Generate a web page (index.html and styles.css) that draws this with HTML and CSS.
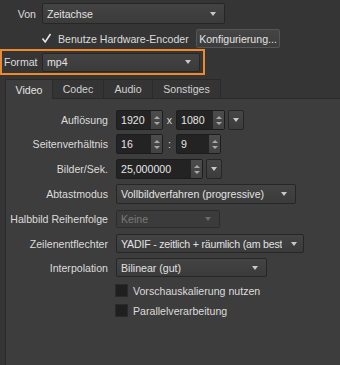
FILE: index.html
```html
<!DOCTYPE html>
<html>
<head>
<meta charset="utf-8">
<link rel="stylesheet" href="styles.css">
</head>
<body>
<div class="page">
  <div class="row r-von">
    <span class="lbl lbl-von">Von</span>
    <div class="combo c-von"><span>Zeitachse</span><i class="arrow"></i></div>
  </div>
  <div class="row r-hw">
    <svg class="tick" width="11" height="11" viewBox="0 0 11 11"><path d="M1.5 5.5 L4.2 9 L9.5 1" fill="none" stroke="#e6e6e6" stroke-width="1.6"/></svg>
    <span class="hwtext">Benutze Hardware-Encoder</span>
    <div class="btn">Konfigurierung...</div>
  </div>
  <div class="format-box">
    <span class="lbl lbl-format">Format</span>
    <div class="combo c-format"><span>mp4</span><i class="arrow"></i></div>
  </div>
  <div class="tabs">
    <div class="tab active">Video</div>
    <div class="tab">Codec</div>
    <div class="tab">Audio</div>
    <div class="tab">Sonstiges</div>
  </div>
  <div class="panel">
    <div class="form">
      <div class="frow fr1">
        <span class="flbl">Auflösung</span>
        <div class="ctrls">
          <div class="spin w47"><span>1920</span><i class="spinbtn"><b class="up"></b><b class="dn"></b></i></div>
          <span class="sep">x</span>
          <div class="spin w49"><span>1080</span><i class="spinbtn"><b class="up"></b><b class="dn"></b></i></div>
          <div class="ddbtn"><i class="arrow"></i></div>
        </div>
      </div>
      <div class="frow fr2">
        <span class="flbl">Seitenverhältnis</span>
        <div class="ctrls">
          <div class="spin w47"><span>16</span><i class="spinbtn"><b class="up"></b><b class="dn"></b></i></div>
          <span class="sep">:</span>
          <div class="spin w45"><span>9</span><i class="spinbtn"><b class="up"></b><b class="dn"></b></i></div>
        </div>
      </div>
      <div class="frow fr3">
        <span class="flbl">Bilder/Sek.</span>
        <div class="ctrls">
          <div class="spin w87"><span>25,000000</span><i class="spinbtn"><b class="up"></b><b class="dn"></b></i></div>
          <div class="ddbtn"><i class="arrow"></i></div>
        </div>
      </div>
      <div class="frow fr4">
        <span class="flbl">Abtastmodus</span>
        <div class="combo w180"><span>Vollbildverfahren (progressive)</span><i class="arrow"></i></div>
      </div>
      <div class="frow fr5">
        <span class="flbl">Halbbild Reihenfolge</span>
        <div class="combo disabled w104"><span>Keine</span><i class="arrow"></i></div>
      </div>
      <div class="frow fr6">
        <span class="flbl">Zeilenentflechter</span>
        <div class="combo w188"><span>YADIF - zeitlich + räumlich (am best</span><i class="arrow"></i></div>
      </div>
      <div class="frow fr7">
        <span class="flbl">Interpolation</span>
        <div class="combo w151"><span>Bilinear (gut)</span><i class="arrow"></i></div>
      </div>
      <div class="frow fr8">
        <span class="flbl"></span>
        <label class="cb"><i class="box"></i><span>Vorschauskalierung nutzen</span></label>
      </div>
      <div class="frow fr9">
        <span class="flbl"></span>
        <label class="cb"><i class="box"></i><span>Parallelverarbeitung</span></label>
      </div>
    </div>
  </div>
</div>
</body>
</html>
```
FILE: styles.css
```css
html, body {
  margin: 0;
  padding: 0;
  background: #353535;
  overflow: hidden;
}
body {
  width: 340px;
  height: 365px;
  font-family: "Liberation Sans", Arial, sans-serif;
  font-size: 10.6px;
  color: #dcdcdc;
}
.page {
  display: flex;
  flex-direction: column;
  height: 365px;
}
.row {
  display: flex;
  align-items: center;
}
.r-von {
  margin-top: 3px;
  height: 21px;
}
.lbl-von {
  width: 36px;
  text-align: right;
  margin-right: 6px;
}
.combo {
  box-sizing: border-box;
  display: flex;
  align-items: center;
  justify-content: space-between;
  height: 20px;
  padding: 0 8px 0 4px;
  background: linear-gradient(#434343, #3b3b3b);
  border: 1px solid #262626;
  border-radius: 2px;
  color: #e2e2e2;
  white-space: nowrap;
  overflow: hidden;
}
.combo span {
  overflow: hidden;
}
.arrow {
  flex: none;
  width: 0;
  height: 0;
  border-left: 3.5px solid transparent;
  border-right: 3.5px solid transparent;
  border-top: 4px solid #c8c8c8;
  margin-left: 4px;
}
.c-von {
  width: 183px;
  height: 21px;
}
.r-hw {
  margin-top: 5px;
  height: 19px;
}
.tick {
  margin-left: 41px;
  margin-right: 6px;
}
.hwtext {
  width: 138px;
  white-space: nowrap;
}
.btn {
  box-sizing: border-box;
  height: 19px;
  width: 84px;
  display: flex;
  align-items: center;
  justify-content: center;
  background: linear-gradient(#454545, #3c3c3c);
  border: 1px solid #555;
  border-radius: 2px;
  color: #e2e2e2;
}
.format-box {
  box-sizing: border-box;
  margin-top: 1px;
  width: 205px;
  height: 26px;
  border: 2px solid #f0892a;
  display: flex;
  align-items: center;
}
.lbl-format {
  width: 38px;
  padding-left: 2px;
}
.c-format {
  width: 158px;
  height: 19px;
}
.tabs {
  margin-top: 4px;
  margin-left: 5px;
  display: flex;
  height: 19px;
  position: relative;
  z-index: 1;
}
.tab {
  box-sizing: border-box;
  height: 19px;
  display: flex;
  align-items: center;
  justify-content: center;
  border: 1px solid #2a2a2a;
  border-left: none;
  border-bottom: none;
  background: #343434;
  color: #d0d0d0;
}
.tab:nth-child(1) { width: 48px; border-left: 1px solid #2a2a2a; }
.tab:nth-child(2) { width: 51px; }
.tab:nth-child(3) { width: 49px; }
.tab:nth-child(4) { width: 68px; }
.tab.active {
  background: #3d3d3d;
  height: 20px;
  color: #e4e4e4;
}
.panel {
  flex: 1;
  margin-left: 5px;
  background: #3d3d3d;
  border-top: 1px solid #2a2a2a;
  border-left: 1px solid #2a2a2a;
}
.form {
  display: flex;
  flex-direction: column;
  padding-top: 11px;
}
.frow {
  display: flex;
  align-items: center;
  height: 20px;
}
.fr2 { margin-top: 4px; }
.fr3 { margin-top: 5px; }
.fr4 { margin-top: 5px; }
.fr5 { margin-top: 6px; height: 18px; }
.fr6 { margin-top: 6px; height: 19px; }
.fr7 { margin-top: 5px; height: 19px; }
.fr8 { margin-top: 7px; height: 13px; }
.fr9 { margin-top: 7px; height: 13px; }
.flbl {
  width: 102px;
  margin-right: 8px;
  text-align: right;
  white-space: nowrap;
}
.ctrls {
  display: flex;
  align-items: center;
  height: 20px;
}
.spin {
  box-sizing: border-box;
  display: flex;
  height: 20px;
  background: #232323;
  border: 1px solid #1c1c1c;
  border-radius: 2px;
  color: #e6e6e6;
}
.spin span {
  flex: 1;
  display: flex;
  align-items: center;
  padding-left: 4px;
}
.spinbtn {
  width: 11px;
  background: linear-gradient(#4c4c4c, #424242);
  display: flex;
  flex-direction: column;
  align-items: center;
  justify-content: center;
  gap: 3px;
}
.spinbtn b {
  width: 0;
  height: 0;
  border-left: 3px solid transparent;
  border-right: 3px solid transparent;
}
.spinbtn .up { border-bottom: 3px solid #a8a8a8; }
.spinbtn .dn { border-top: 3px solid #a8a8a8; }
.w47 { width: 47px; }
.w49 { width: 49px; }
.w45 { width: 45px; }
.w87 { width: 87px; }
.w180 { width: 180px; }
.w104 { width: 104px; height: 18px; }
.w188 { width: 188px; height: 19px; padding-right: 6px; letter-spacing: -0.2px; }
.w151 { width: 151px; height: 19px; }
.sep {
  width: 13px;
  text-align: center;
  color: #dcdcdc;
}
.ddbtn {
  box-sizing: border-box;
  margin-left: 3px;
  width: 16px;
  height: 20px;
  display: flex;
  align-items: center;
  justify-content: center;
  background: linear-gradient(#464646, #3c3c3c);
  border: 1px solid #262626;
  border-radius: 2px;
}
.ddbtn .arrow { margin-left: 0; }
.combo.disabled {
  color: #7a7a7a;
  background: #3b3b3b;
  border-color: #2c2c2c;
}
.combo.disabled .arrow { border-top-color: #6a6a6a; }
.cb {
  display: flex;
  align-items: center;
  margin-left: -1px;
}
.box {
  box-sizing: border-box;
  width: 13px;
  height: 13px;
  background: #1f1f1f;
  border: 1px solid #2a2a2a;
  margin-right: 5px;
}
```
